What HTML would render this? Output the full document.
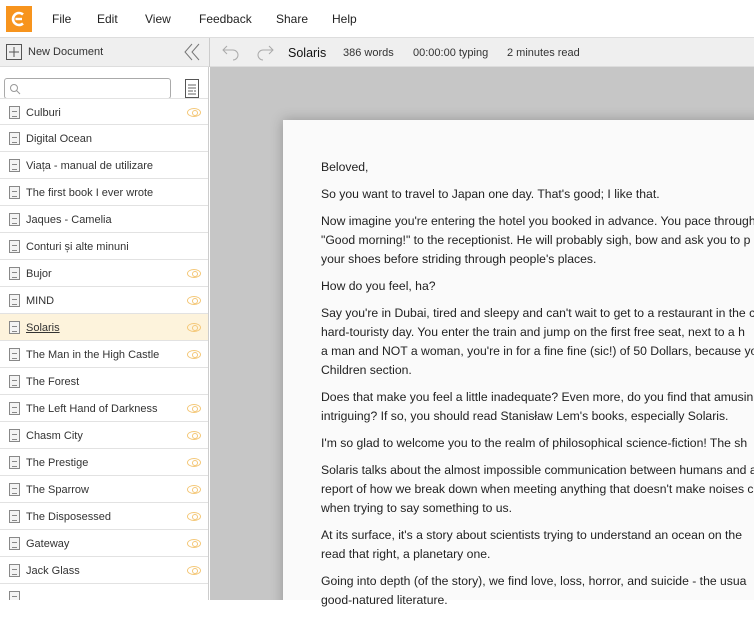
<!DOCTYPE html>
<html><head><style>
*{margin:0;padding:0;box-sizing:border-box}
body{width:754px;height:600px;overflow:hidden;font-family:"Liberation Sans",sans-serif;background:#fff;position:relative;color:#222}
.top{position:absolute;left:0;top:0;width:754px;height:38px;background:#fff;border-bottom:1px solid #ddd}
.logo{position:absolute;left:6px;top:6px;width:26px;height:26px;background:#f7941d}
.menu{position:absolute;top:12px;font-size:12px;color:#222}
.tb{position:absolute;left:0;top:38px;width:754px;height:29px;background:#efefef;border-bottom:1px solid #ddd}
.side{position:absolute;left:0;top:67px;width:209px;height:533px;background:#fff;border-right:1px solid #ccc;overflow:hidden}
.main{position:absolute;left:210px;top:67px;width:544px;height:533px;background:#c6c6c6;overflow:hidden}
.paper{position:absolute;left:73px;top:53px;width:480px;height:500px;background:#fafafa;box-shadow:0 0 12px rgba(0,0,0,.25)}
.txt{position:absolute;left:321px;top:158px;width:440px;font-size:12.2px;line-height:19px;color:#222;white-space:nowrap}
.txt p{margin-bottom:8px}
.row{position:absolute;left:0;width:209px;height:27px;border-bottom:1px solid #e2e2e2;font-size:11px;color:#333}
.row span{position:absolute;left:26px;top:8px}
.doc{position:absolute;left:9px;top:7px;width:11px;height:13px;border:1px solid #888;background:#f4f4f4}
.doc:after{content:"";position:absolute;left:2px;top:4px;width:5px;height:4px;border-top:1px solid #888;border-bottom:1px solid #888}
.eye{position:absolute;left:187px;top:9px;width:14px;height:9px;border:1px solid #f4c777;border-radius:50%}
.eye:after{content:"";position:absolute;left:4px;top:1px;width:4px;height:4px;border:1px solid #f4c777;border-radius:50%}
.sel{background:#fdf3dc}
.sel span{text-decoration:underline}
</style></head><body>
<div class="top">
<div class="logo"><svg width="26" height="26"><path d="M17 8.5A6 6 0 1 0 17 17.5" stroke="#fff" stroke-width="2.6" fill="none"/><path d="M9.5 13H16" stroke="#fff" stroke-width="2.4"/></svg></div>
<div class="menu" style="left:52px">File</div>
<div class="menu" style="left:97px">Edit</div>
<div class="menu" style="left:145px">View</div>
<div class="menu" style="left:199px">Feedback</div>
<div class="menu" style="left:276px">Share</div>
<div class="menu" style="left:332px">Help</div>
</div>
<div class="tb">
<svg style="position:absolute;left:6px;top:6px" width="16" height="16"><rect x="0.5" y="0.5" width="15" height="15" fill="none" stroke="#555"/><path d="M8 3V13M3 8H13" stroke="#555"/></svg>
<div style="position:absolute;left:28px;top:8px;font-size:11px;color:#333">New Document</div>
<svg style="position:absolute;left:184px;top:5px" width="16" height="18"><path d="M8 1L1 9L8 17M15 1L8 9L15 17" fill="none" stroke="#777"/></svg>
<div style="position:absolute;left:209px;top:0;width:1px;height:29px;background:#ccc"></div>
<svg style="position:absolute;left:222px;top:5px" width="18" height="18"><path d="M5 3L1 7L5 11M1 7H11A5 5 0 0 1 11 17" fill="none" stroke="#aaa"/></svg>
<svg style="position:absolute;left:256px;top:5px" width="18" height="18"><path d="M13 3L17 7L13 11M17 7H7A5 5 0 0 0 7 17" fill="none" stroke="#aaa"/></svg>
<div style="position:absolute;left:288px;top:8px;font-size:12.5px;color:#111">Solaris</div>
<div style="position:absolute;left:343px;top:9px;font-size:11px;color:#333">386 words</div>
<div style="position:absolute;left:413px;top:9px;font-size:11px;color:#333">00:00:00 typing</div>
<div style="position:absolute;left:507px;top:9px;font-size:11px;color:#333">2 minutes read</div>
</div>
<div class="side">
<div style="position:absolute;left:4px;top:11px;width:167px;height:21px;border:1px solid #aaa;border-radius:3px;background:#fff"></div>
<svg style="position:absolute;left:9px;top:16px" width="12" height="12"><circle cx="5" cy="5" r="3.5" fill="none" stroke="#999"/><path d="M7.5 7.5L11 11" stroke="#999"/></svg>
<svg style="position:absolute;left:185px;top:12px" width="14" height="19"><rect x="0.5" y="0.5" width="13" height="18" fill="none" stroke="#555"/><path d="M3 6H11M3 9H11M3 12H8M9 12H11M3 15H11" stroke="#666"/></svg>
<div class="row" style="top:31px;border-top:1px solid #e2e2e2"><div class="doc"></div><span>Culburi</span><div class="eye"></div></div>
<div class="row" style="top:58px"><div class="doc"></div><span>Digital Ocean</span></div>
<div class="row" style="top:85px"><div class="doc"></div><span>Viața - manual de utilizare</span></div>
<div class="row" style="top:112px"><div class="doc"></div><span>The first book I ever wrote</span></div>
<div class="row" style="top:139px"><div class="doc"></div><span>Jaques - Camelia</span></div>
<div class="row" style="top:166px"><div class="doc"></div><span>Conturi și alte minuni</span></div>
<div class="row" style="top:193px"><div class="doc"></div><span>Bujor</span><div class="eye"></div></div>
<div class="row" style="top:220px"><div class="doc"></div><span>MIND</span><div class="eye"></div></div>
<div class="row sel" style="top:247px"><div class="doc"></div><span>Solaris</span><div class="eye"></div></div>
<div class="row" style="top:274px"><div class="doc"></div><span>The Man in the High Castle</span><div class="eye"></div></div>
<div class="row" style="top:301px"><div class="doc"></div><span>The Forest</span></div>
<div class="row" style="top:328px"><div class="doc"></div><span>The Left Hand of Darkness</span><div class="eye"></div></div>
<div class="row" style="top:355px"><div class="doc"></div><span>Chasm City</span><div class="eye"></div></div>
<div class="row" style="top:382px"><div class="doc"></div><span>The Prestige</span><div class="eye"></div></div>
<div class="row" style="top:409px"><div class="doc"></div><span>The Sparrow</span><div class="eye"></div></div>
<div class="row" style="top:436px"><div class="doc"></div><span>The Disposessed</span><div class="eye"></div></div>
<div class="row" style="top:463px"><div class="doc"></div><span>Gateway</span><div class="eye"></div></div>
<div class="row" style="top:490px"><div class="doc"></div><span>Jack Glass</span><div class="eye"></div></div>
<div class="row" style="top:517px"><div class="doc"></div><span></span></div>
</div>
<div class="main"><div class="paper"></div></div>
<div class="txt">
<p>Beloved,</p>
<p>So you want to travel to Japan one day. That's good; I like that.</p>
<p>Now imagine you're entering the hotel you booked in advance. You pace through<br>"Good morning!" to the receptionist. He will probably sigh, bow and ask you to p<br>your shoes before striding through people's places.</p>
<p>How do you feel, ha?</p>
<p>Say you're in Dubai, tired and sleepy and can't wait to get to a restaurant in the c<br>hard-touristy day. You enter the train and jump on the first free seat, next to a h<br>a man and NOT a woman, you're in for a fine fine (sic!) of 50 Dollars, because yo<br>Children section.</p>
<p>Does that make you feel a little inadequate? Even more, do you find that amusin<br>intriguing? If so, you should read Stanisław Lem's books, especially Solaris.</p>
<p>I'm so glad to welcome you to the realm of philosophical science-fiction! The sh</p>
<p>Solaris talks about the almost impossible communication between humans and a<br>report of how we break down when meeting anything that doesn't make noises c<br>when trying to say something to us.</p>
<p>At its surface, it's a story about scientists trying to understand an ocean on the<br>read that right, a planetary one.</p>
<p>Going into depth (of the story), we find love, loss, horror, and suicide - the usua<br>good-natured literature.</p>
</div>
</body></html>
